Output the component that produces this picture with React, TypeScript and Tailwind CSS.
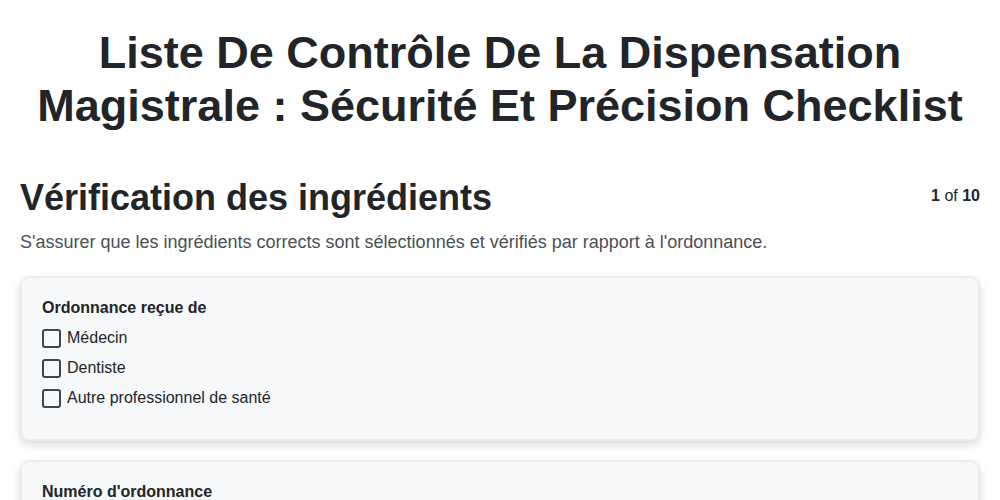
export default function App() {
  const options = ['Médecin', 'Dentiste', 'Autre professionnel de santé'];
  return (
    <div className="min-h-screen bg-white px-5 pt-[26px] text-[#1f2328]" style={{ fontFamily: '"Liberation Sans", Arial, sans-serif' }}>
      <h1 className="text-center text-[45px] font-bold leading-[53px] text-[#212529]">
        Liste De Contrôle De La Dispensation Magistrale : Sécurité Et Précision Checklist
      </h1>
      <div className="mt-[44px] flex items-start justify-between">
        <h2 className="text-[36px] font-bold leading-[44px] text-[#212529]">Vérification des ingrédients</h2>
        <div className="pt-[8px] text-base text-[#212529]">
          <span className="font-bold">1</span> of <span className="font-bold">10</span>
        </div>
      </div>
      <p className="mt-[10px] text-[18px] leading-6 text-[#495057]">
        S'assurer que les ingrédients corrects sont sélectionnés et vérifiés par rapport à l'ordonnance.
      </p>
      <div className="mt-[22px] space-y-[19px]">
        <div className="rounded-[10px] border-2 border-[#e9ebef] bg-[#f7f8fa] px-5 pb-[26px] pt-[18px] shadow-[0_4px_10px_rgba(0,0,0,0.15)]">
          <div className="text-base font-bold leading-6 text-[#212529]">Ordonnance reçue de</div>
          <div className="mt-[3px] flex flex-col">
            {options.map((o) => (
              <label key={o} className="flex h-[30px] items-center gap-[6px] text-base text-[#212529]">
                <span className="h-[19px] w-[19px] rounded-[3px] border-2 border-[#3f4451]" />
                {o}
              </label>
            ))}
          </div>
        </div>
        <div className="rounded-[10px] border-2 border-[#e9ebef] bg-[#f7f8fa] px-5 pb-[26px] pt-[18px] shadow-[0_4px_10px_rgba(0,0,0,0.15)]">
          <div className="text-base font-bold leading-6 text-[#212529]">Numéro d'ordonnance</div>
          <div className="mt-2 h-10 rounded-md border border-[#ced4da] bg-white" />
        </div>
      </div>
    </div>
  );
}
